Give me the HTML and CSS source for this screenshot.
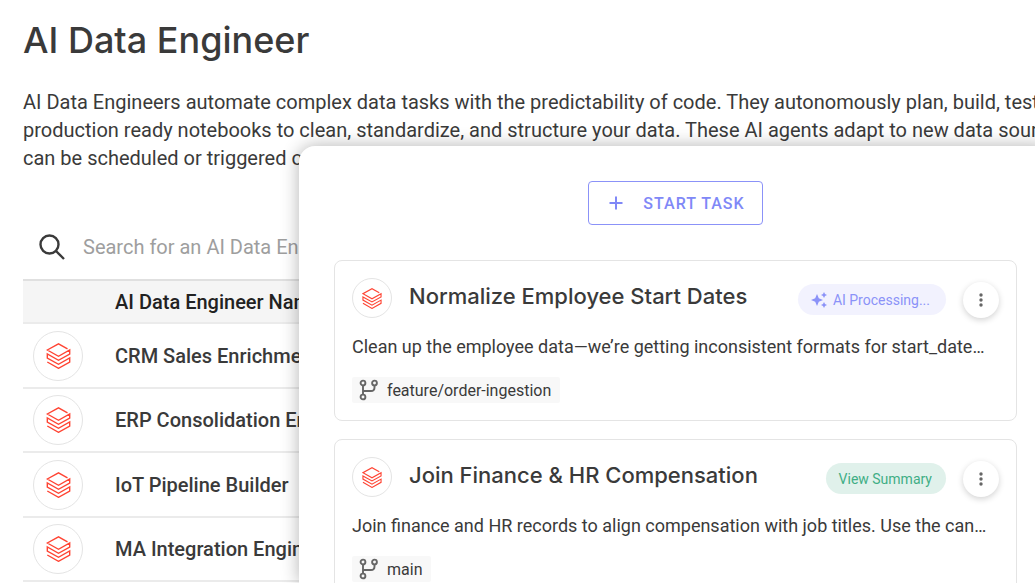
FILE: index.html
```html
<!DOCTYPE html>
<html lang="en">
<head>
    <meta charset="UTF-8">
    <meta name="viewport" content="width=device-width, initial-scale=1.0">
    <title>AI Data Engineer</title>
    <link rel="stylesheet" href="styles.css">
</head>
<body>
    <!-- Shared icons -->
    <svg class="icon-defs" aria-hidden="true">
        <symbol id="icon-stack" viewBox="0 0 24 26">
            <path d="M21 5.8 12 .8.8 7 12 13.3 23.2 7v4L12 17.3.8 11v4L12 21.3 23.2 15v4L12 25.3.8 19" fill="none" stroke="currentColor" stroke-width="1.4"/>
        </symbol>
        <symbol id="icon-branch" viewBox="0 0 20 22">
            <g fill="none" stroke="currentColor" stroke-width="1.9">
                <circle cx="4" cy="4" r="2.4"/>
                <circle cx="15.5" cy="4" r="2.4"/>
                <circle cx="4" cy="18" r="2.4"/>
                <path d="M4 6.4v9.2M4 12h8q3.500 0 3.500-3.500v-2"/>
            </g>
        </symbol>
        <symbol id="icon-dots" viewBox="0 0 16 16">
            <g fill="currentColor">
                <circle cx="8" cy="3" r="1.7"/>
                <circle cx="8" cy="8" r="1.7"/>
                <circle cx="8" cy="13" r="1.7"/>
            </g>
        </symbol>
    </svg>

    <main class="page">
        <h1>AI Data Engineer</h1>
        <p class="intro">
            AI Data Engineers automate complex data tasks with the predictability of code. They autonomously plan, build, test,<br>
            production ready notebooks to clean, standardize, and structure your data. These AI agents adapt to new data sources,<br>
            can be scheduled or triggered on demand.
        </p>

        <div class="search">
            <label for="search-input" aria-label="Search">
                <svg class="search-icon" viewBox="0 0 26 26" fill="none" stroke="currentColor" stroke-width="2.4">
                    <circle cx="10.5" cy="10.5" r="9"/>
                    <path d="M17 17l8 8"/>
                </svg>
            </label>
            <input id="search-input" type="text" placeholder="Search for an AI Data Engineer">
        </div>

        <table class="engineers">
            <thead>
                <tr>
                    <th class="logo-col"></th>
                    <th>AI Data Engineer Name</th>
                </tr>
            </thead>
            <tbody>
                <tr>
                    <td><span class="logo"><svg><use href="#icon-stack"/></svg></span></td>
                    <td>CRM Sales Enrichment</td>
                </tr>
                <tr>
                    <td><span class="logo"><svg><use href="#icon-stack"/></svg></span></td>
                    <td>ERP Consolidation Engineer</td>
                </tr>
                <tr>
                    <td><span class="logo"><svg><use href="#icon-stack"/></svg></span></td>
                    <td>IoT Pipeline Builder</td>
                </tr>
                <tr>
                    <td><span class="logo"><svg><use href="#icon-stack"/></svg></span></td>
                    <td>MA Integration Engineer</td>
                </tr>
            </tbody>
        </table>
    </main>

    <!-- Task panel, lies over the page -->
    <aside class="panel">
        <button class="start-btn">
            <svg viewBox="0 0 14 14" fill="none" stroke="currentColor" stroke-width="2">
                <path d="M7 .5v13M.5 7h13"/>
            </svg>
            START TASK
        </button>

        <article class="card">
            <div class="card-header">
                <span class="logo logo-small"><svg><use href="#icon-stack"/></svg></span>
                <h2>Normalize Employee Start Dates</h2>
                <span class="pill pill-processing">
                    <svg viewBox="0 0 16 16" fill="currentColor">
                        <path d="M6 2 7.8 6.200 12 8 7.800 9.800 6 14 4.200 9.800 0 8 4.200 6.200zM13 0l1 2 2 1-2 1-1 2-1-2-2-1 2-1zM13 10l1 2 2 1-2 1-1 2-1-2-2-1 2-1z"/>
                    </svg>
                    AI Processing...
                </span>
                <button class="menu-btn" aria-label="Task menu"><svg><use href="#icon-dots"/></svg></button>
            </div>
            <p>Clean up the employee data—we’re getting inconsistent formats for start_date…</p>
            <span class="branch"><svg><use href="#icon-branch"/></svg>feature/order-ingestion</span>
        </article>

        <article class="card">
            <div class="card-header">
                <span class="logo logo-small"><svg><use href="#icon-stack"/></svg></span>
                <h2>Join Finance &amp; HR Compensation</h2>
                <button class="pill pill-done">View Summary</button>
                <button class="menu-btn" aria-label="Task menu"><svg><use href="#icon-dots"/></svg></button>
            </div>
            <p>Join finance and HR records to align compensation with job titles. Use the can…</p>
            <span class="branch"><svg><use href="#icon-branch"/></svg>main</span>
        </article>
    </aside>
</body>
</html>
```
FILE: styles.css
```css
* {
    box-sizing: border-box;
}
body {
    margin: 0;
    min-height: 100vh;
    position: relative;
    overflow: hidden;
    font-family: Roboto, sans-serif;
    color: #3a3a3a;
    background: #fff;
}
button {
    font-family: inherit;
    cursor: pointer;
}
.icon-defs {
    display: none;
}
.page {
    padding: 16px 0 0 23px;
}
h1 {
    margin: 0 0 24px;
    font-family: Inter, sans-serif;
    font-size: 36px;
    font-weight: 500;
    line-height: 48px;
}
.intro {
    margin: 0;
    font-size: 20px;
    line-height: 28px;
    white-space: nowrap;
}
.search {
    display: flex;
    align-items: center;
    gap: 18px;
    height: 64px;
    margin-top: 43px;
    padding-left: 16px;
}
.search label {
    display: flex;
}
.search-icon {
    width: 26px;
    height: 26px;
}
.search input {
    flex: 1;
    padding: 0;
    border: none;
    outline: none;
    font-family: inherit;
    font-size: 20px;
    color: #3a3a3a;
}
.search input::placeholder {
    color: #9e9e9e;
}

/* Engineer table */
.engineers {
    width: 100%;
    border-spacing: 0;
    font-size: 20px;
    font-weight: 500;
}
.engineers th,
.engineers td {
    padding: 0;
    border-bottom: 2px solid #ebebeb;
    text-align: left;
}
.engineers th {
    height: 45px;
    background: #f5f5f5;
    border-top: 2px solid #e0e0e0;
    font-weight: 500;
    color: #222;
}
.engineers td {
    height: 64px;
}
.engineers tbody tr:nth-child(odd) td {
    height: 65px;
}
.logo-col {
    width: 92px;
}
.logo {
    display: flex;
    align-items: center;
    justify-content: center;
    flex-shrink: 0;
    width: 50px;
    height: 50px;
    margin-left: 10px;
    border: 1px solid #e4e4e4;
    border-radius: 50%;
    background: #fff;
    color: #ff4433;
}
.logo svg {
    width: 25px;
    height: 26px;
}
.logo-small {
    width: 40px;
    height: 40px;
    margin-left: 0;
}
.logo-small svg {
    width: 20px;
    height: 21px;
}

/* Task panel */
.panel {
    position: absolute;
    top: 146px;
    right: -18px;
    bottom: 0;
    left: 299px;
    display: flex;
    flex-direction: column;
    gap: 18px;
    padding: 35px 36px 0 35px;
    border-radius: 16px 16px 0 0;
    background: #fff;
    box-shadow: 0 0 18px rgba(0,0,0,0.3);
}
.start-btn {
    display: flex;
    align-items: center;
    align-self: center;
    flex-shrink: 0;
    gap: 20px;
    height: 44px;
    margin-bottom: 17px;
    padding: 0 17px 0 20px;
    border: 1px solid #8b92f8;
    border-radius: 4px;
    background: #fff;
    color: #8088f7;
    font-size: 16px;
    font-weight: 500;
    letter-spacing: 1px;
}
.start-btn svg {
    width: 14px;
    height: 14px;
}
.card {
    flex-shrink: 0;
    padding: 17px;
    border: 1px solid #e4e4e4;
    border-radius: 8px;
}
.card-header {
    display: flex;
    align-items: center;
    gap: 17px;
}
.card h2 {
    flex: 1;
    margin: 0;
    font-family: Inter, sans-serif;
    font-size: 22px;
    font-weight: 500;
    line-height: 36px;
    padding-bottom: 4px;
    white-space: nowrap;
}
.card p {
    margin: 16px 0 17px;
    font-size: 18px;
    line-height: 26px;
    white-space: nowrap;
}
.pill {
    display: flex;
    align-items: center;
    gap: 6px;
    height: 31px;
    margin-top: 3px;
    padding: 0 14px 0 13px;
    border: none;
    border-radius: 16px;
    font-size: 14px;
    white-space: nowrap;
}
.pill svg {
    width: 16px;
    height: 16px;
}
.pill-processing {
    padding-right: 16px;
    background: #f2f2fe;
    color: #8b92f8;
}
.pill-done {
    background: #e0f1eb;
    color: #3fae85;
}
.menu-btn {
    display: flex;
    align-items: center;
    justify-content: center;
    width: 36px;
    height: 36px;
    margin-top: 3px;
    padding: 0;
    border: none;
    border-radius: 50%;
    background: #fff;
    color: #666;
    box-shadow: 0 2px 6px rgba(0,0,0,0.18);
}
.menu-btn svg {
    width: 16px;
    height: 16px;
}
.branch {
    display: inline-flex;
    align-items: center;
    gap: 8px;
    height: 26px;
    padding: 0 9px 0 7px;
    border-radius: 2px;
    background: #f8f8f8;
    font-size: 16px;
    vertical-align: top;
}
.branch svg {
    width: 20px;
    height: 22px;
    color: #666;
}
```
